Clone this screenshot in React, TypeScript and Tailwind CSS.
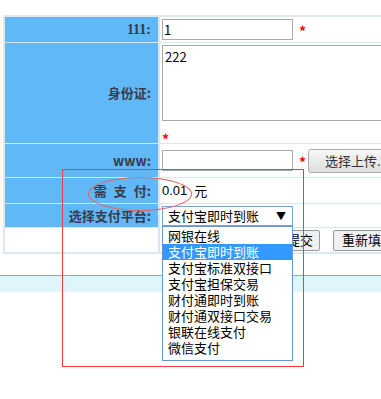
const labelCls =
  "w-[153px] shrink-0 bg-[#60b8f6] flex items-center justify-end pr-[7px] text-[13px] font-bold text-[#3a3a4c]"

const payOptions = [
  "网银在线",
  "支付宝即时到账",
  "支付宝标准双接口",
  "支付宝担保交易",
  "财付通即时到账",
  "财付通双接口交易",
  "银联在线支付",
  "微信支付",
]

function Star() {
  return <span className="text-[#ff0000] text-[14px] font-bold leading-none">*</span>
}

export default function App() {
  return (
    <div
      className="relative w-[381px] h-[399px] overflow-hidden bg-white text-black"
      style={{ fontFamily: '"Noto Sans CJK SC", "DejaVu Sans", sans-serif' }}
    >
      <div className="pt-[15px] pl-[3px]">
        <div className="w-[440px] border-2 border-[#dde9f1] bg-[#d4e9f7] flex flex-col gap-px">
          <div className="flex h-[25px] gap-[2px]">
            <div className={labelCls + " text-[14px]"} style={{ fontFamily: '"Liberation Serif", serif' }}>
              111:
            </div>
            <div className="flex-1 bg-white flex items-center pl-[2px]">
              <div className="w-[131px] h-[21px] border border-[#a9a9a9] flex items-center pl-[1px] text-[13px]">
                1
              </div>
              <span className="ml-[6px]">
                <Star />
              </span>
            </div>
          </div>

          <div className="flex h-[100px] gap-[2px]">
            <div className={labelCls}>身份证:</div>
            <div className="flex-1 bg-white pl-[2px] pt-[2px]">
              <div className="h-[76px] border border-[#a9a9a9] pl-[2px] text-[13px] leading-[22px]">222</div>
              <div className="pt-[5px]">
                <Star />
              </div>
            </div>
          </div>

          <div className="flex h-[33px] gap-[2px]">
            <div className={labelCls + " text-[12px]"}>www:</div>
            <div className="flex-1 bg-white flex items-center pl-[2px]">
              <div className="w-[131px] h-[21px] border border-[#a9a9a9]" />
              <span className="ml-[6px] mr-[2px]">
                <Star />
              </span>
              <div className="h-[24px] pl-[16px] pr-[10px] rounded-[3px] border border-[#acacac] bg-gradient-to-b from-[#f7f7f7] to-[#dedede] flex items-center text-[13px] text-[#333] whitespace-nowrap">
                选择上传...
              </div>
            </div>
          </div>

          <div className="flex h-[25px] gap-[2px]">
            <div className={labelCls + " gap-[7px]"}>
              <span>需</span>
              <span>支</span>
              <span>付:</span>
            </div>
            <div className="flex-1 bg-white flex items-center pl-[2px] text-[13px]">
              <span style={{ fontFamily: '"Liberation Sans", sans-serif' }}>0.01</span>
              <span className="ml-[7px]">元</span>
            </div>
          </div>

          <div className="flex h-[23px] gap-[2px]">
            <div className={labelCls}>选择支付平台:</div>
            <div className="flex-1 bg-white flex items-center pl-[2px]">
              <div className="w-[131px] h-[20px] border border-[#7b9fd8] flex items-center justify-between pl-[5px] pr-[6px] text-[13px]">
                <span>支付宝即时到账</span>
                <span className="text-[10px]">▼</span>
              </div>
            </div>
          </div>

          <div className="flex h-[24px] gap-[2px]">
            <div className="w-[153px] shrink-0 bg-white" />
            <div className="flex-1 bg-white flex items-center pl-[120px] gap-[13px]">
              <div className="h-[21px] px-[6px] rounded-[2px] border border-[#9a9a9a] bg-[#f0f0f0] flex items-center text-[13px]">
                提交
              </div>
              <div className="h-[21px] px-[8px] rounded-[2px] border border-[#9a9a9a] bg-[#f0f0f0] flex items-center text-[13px] whitespace-nowrap">
                重新填写
              </div>
            </div>
          </div>
        </div>

        <div className="mt-[21px] -ml-[3px] h-[17px] border-t border-[#5db6ef] bg-[#e0f4fc]" />
      </div>

      {/* open select list */}
      <div className="absolute left-[162px] top-[226px] w-[131px] h-[135px] border border-[#6e96d6] bg-white py-px text-[13px]">
        {payOptions.map((o, i) => (
          <div
            key={o}
            className={
              "h-[16px] leading-[16px] pl-[5px] whitespace-nowrap " +
              (i === 1 ? "bg-[#3399ff] text-white" : "")
            }
          >
            {o}
          </div>
        ))}
      </div>

      {/* annotations */}
      <div className="absolute left-[62px] top-[169px] w-[242px] h-[198px] border border-[#f23c3c] pointer-events-none" />
      <div className="absolute left-[88px] top-[177px] w-[104px] h-[34px] rounded-[50%] border border-[#e86060] pointer-events-none" />
    </div>
  )
}
